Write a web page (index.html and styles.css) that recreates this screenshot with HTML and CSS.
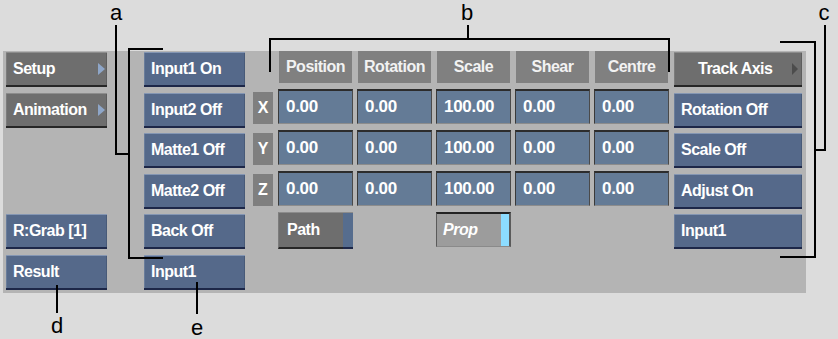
FILE: index.html
```html
<!DOCTYPE html>
<html lang="en">
<head>
  <meta charset="UTF-8" />
  <title>Axis Menu</title>
  <link rel="stylesheet" href="styles.css">
</head>
<body>
<div class="screen">
  <div class="panel">
    <!-- left: menu + result -->
    <div class="col-side">
      <div class="btn btn-gray">Setup <span class="arrow"></span></div>
      <div class="btn btn-gray">Animation <span class="arrow"></span></div>
      <div class="spacer"></div>
      <div class="btn btn-blue">R:Grab [1]</div>
      <div class="btn btn-blue">Result</div>
    </div>

    <!-- inputs -->
    <div class="col-side col-inputs">
      <div class="btn btn-blue">Input1 On</div>
      <div class="btn btn-blue">Input2 Off</div>
      <div class="btn btn-blue">Matte1 Off</div>
      <div class="btn btn-blue">Matte2 Off</div>
      <div class="btn btn-blue">Back Off</div>
      <div class="btn btn-blue">Input1</div>
    </div>

    <!-- transform table -->
    <div class="table">
      <div></div>
      <div class="head">Position</div>
      <div class="head">Rotation</div>
      <div class="head">Scale</div>
      <div class="head">Shear</div>
      <div class="head">Centre</div>

      <div class="axis">X</div>
      <div class="val">0.00</div>
      <div class="val">0.00</div>
      <div class="val">100.00</div>
      <div class="val">0.00</div>
      <div class="val">0.00</div>

      <div class="axis">Y</div>
      <div class="val">0.00</div>
      <div class="val">0.00</div>
      <div class="val">100.00</div>
      <div class="val">0.00</div>
      <div class="val">0.00</div>

      <div class="axis">Z</div>
      <div class="val">0.00</div>
      <div class="val">0.00</div>
      <div class="val">100.00</div>
      <div class="val">0.00</div>
      <div class="val">0.00</div>

      <div class="btn btn-gray path"><span class="label">Path</span><span class="path-tab"></span></div>
      <div class="prop"><span class="label">Prop</span><span class="prop-tab"></span></div>
    </div>

    <!-- track axis -->
    <div class="col-side col-track">
      <div class="btn btn-gray track">Track Axis <span class="arrow dark"></span></div>
      <div class="btn btn-blue">Rotation Off</div>
      <div class="btn btn-blue">Scale Off</div>
      <div class="btn btn-blue">Adjust On</div>
      <div class="btn btn-blue">Input1</div>
    </div>
  </div>

  <!-- callouts -->
  <svg class="callouts" width="838" height="339" viewBox="0 0 838 339">
    <path d="M116 25 V154 H129 M163 49 H129 V258 H163" />
    <path d="M468 25 V39 M270 72 V39 H669 V72" />
    <path d="M825 25 V150 H815 M780 42 H815 V257 H780" />
    <path d="M57 285 V313" />
    <path d="M197 282 V314" />
  </svg>
  <span class="tag tag-a">a</span>
  <span class="tag tag-b">b</span>
  <span class="tag tag-c">c</span>
  <span class="tag tag-d">d</span>
  <span class="tag tag-e">e</span>
</div>
</body>
</html>
```

FILE: styles.css
```css
body {
  margin: 0;
  background: #dcdcdc;
  font-family: "Liberation Sans", Arial, sans-serif;
}
.screen {
  position: relative;
  width: 838px;
  height: 339px;
  overflow: hidden;
}
.panel {
  margin: 51px 0 0 3px;
  width: 803px;
  height: 242px;
  background: #b4b4b4;
  display: flex;
  align-items: flex-start;
  padding-left: 3px;
  box-sizing: border-box;
}
.col-side {
  width: 101px;
  padding-top: 1px;
  display: grid;
  grid-template-rows: repeat(6, 35px);
  row-gap: 5.6px;
}
.spacer {
  grid-row: span 2;
}
.col-inputs {
  margin-left: 37px;
}
.col-track {
  width: 128px;
  margin-left: 5px;
  grid-template-rows: repeat(5, 35px);
}
.btn {
  display: flex;
  align-items: center;
  padding-left: 7px;
  box-sizing: border-box;
  color: #fff;
  font-weight: bold;
  font-size: 16px;
  letter-spacing: -0.5px;
  white-space: nowrap;
}
.btn-blue {
  background: #55698a;
  border-top: 1px solid #8496b3;
  border-bottom: 2px solid #1d2748;
  box-shadow: inset 1px 0 #6a7d9b, inset -1px 0 #485a78;
}
.btn-gray {
  background: #6e6e6e;
  border-top: 1px solid #8c8c8c;
  border-bottom: 2px solid #262626;
  box-shadow: inset 1px 0 #7c7c7c, inset -1px 0 #5e5e5e;
  justify-content: space-between;
  padding-right: 2px;
}
.arrow {
  width: 0;
  height: 0;
  border-top: 6px solid transparent;
  border-bottom: 6px solid transparent;
  border-left: 7px solid #8ea6c8;
}
.arrow.dark {
  border-left: 6px solid #4c4c4c;
}
.track {
  padding-left: 24px;
  padding-right: 4px;
  justify-content: space-between;
}
.table {
  margin-left: 8px;
  display: grid;
  grid-template-columns: 21px repeat(5, 75px);
  grid-template-rows: 32px 35px 35px 35px 37px;
  column-gap: 4px;
  row-gap: 6px;
}
.head {
  margin: 0 1px;
  background: #808080;
  color: #f2f2f2;
  font-weight: bold;
  font-size: 16px;
  letter-spacing: -0.5px;
  display: flex;
  align-items: center;
  justify-content: center;
}
.axis {
  width: 20px;
  height: 32px;
  align-self: end;
  background: #7f7f7f;
  color: #fff;
  font-weight: bold;
  font-size: 16px;
  display: flex;
  align-items: center;
  justify-content: center;
}
.val {
  background: #647b96;
  border-top: 2px solid #2c2c2c;
  border-left: 1px solid #3a3a3a;
  border-right: 1px solid #4a4a4a;
  border-bottom: 1px solid #8c8c8c;
  box-sizing: border-box;
  color: #fff;
  font-weight: bold;
  font-size: 17px;
  letter-spacing: -0.3px;
  display: flex;
  align-items: center;
  padding-left: 7px;
}
.path {
  grid-column: 2;
  padding-left: 8px;
  padding-right: 0;
  box-shadow: none;
  border-left: 1px solid #7c7c7c;
}
.path .label {
  flex: 1;
}
.path-tab {
  align-self: stretch;
  width: 10px;
  background: #566d8e;
  margin-bottom: -2px;
  border-bottom: 2px solid #1d2748;
}
.prop {
  grid-column: 4;
  height: 35px;
  align-self: start;
  display: flex;
  align-items: center;
  background: #9c9c9c;
  border-top: 2px solid #222;
  border-left: 1px solid #5a5a5a;
  border-right: 2px solid #5a5a5a;
  border-bottom: 1px solid #8a8a8a;
  box-sizing: border-box;
  padding-left: 6px;
  color: #fff;
  font-weight: bold;
  font-style: italic;
  font-size: 16px;
  letter-spacing: -0.5px;
}
.prop .label {
  flex: 1;
}
.prop-tab {
  align-self: stretch;
  width: 8px;
  background: #8cdcff;
}
.callouts {
  position: absolute;
  left: 0;
  top: 0;
  pointer-events: none;
}
.callouts path {
  fill: none;
  stroke: #000;
  stroke-width: 2;
}
.tag {
  position: absolute;
  font-size: 22px;
  line-height: 22px;
  color: #000;
  transform: translateX(-50%);
}
.tag-a { left: 116px; top: 2px; }
.tag-b { left: 467px; top: 2px; }
.tag-c { left: 824px; top: 2px; }
.tag-d { left: 57px; top: 315px; }
.tag-e { left: 197px; top: 317px; }
```
